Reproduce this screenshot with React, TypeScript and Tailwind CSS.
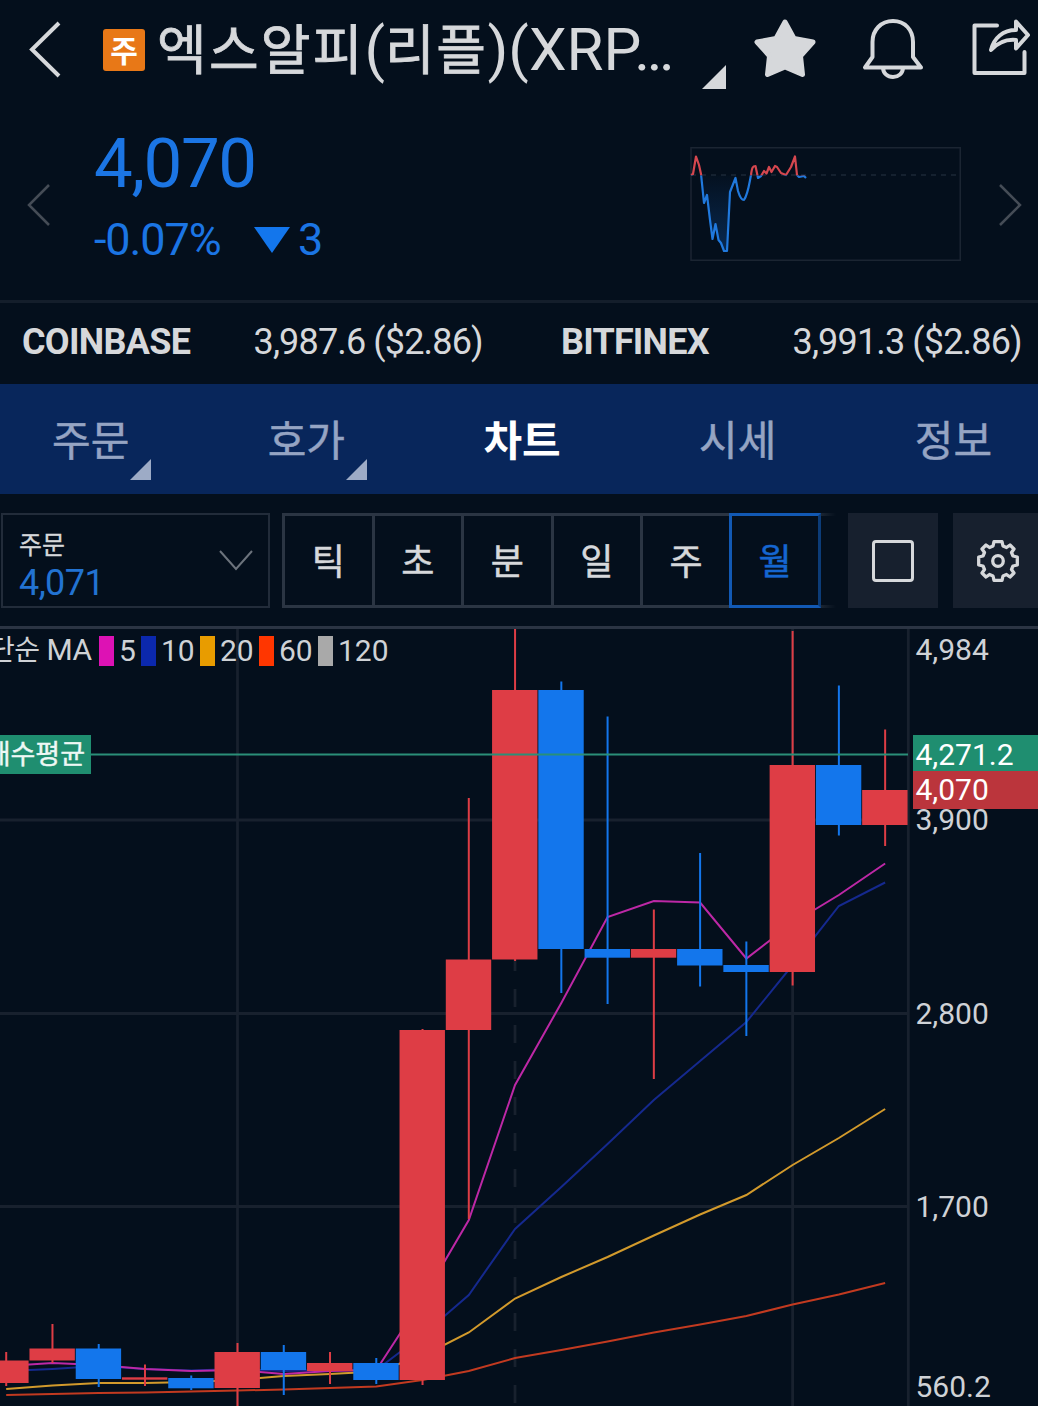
import { clsx } from "clsx";

type Candle = {
  up: boolean;
  top: number;
  bottom: number;
  high: number;
  low: number;
};

const CHART_WIDTH = 910;
const CHART_HEIGHT = 777;
const STEP = 46.26;
const FIRST_X = 6.2;

const candles: Candle[] = [
  { up: true, top: 731.5, bottom: 754, high: 723, low: 757 },
  { up: true, top: 719.5, bottom: 731.5, high: 695, low: 734 },
  { up: false, top: 719.5, bottom: 750, high: 715, low: 758 },
  { up: true, top: 748.3, bottom: 750.7, high: 735.5, low: 757 },
  { up: false, top: 749, bottom: 759.3, high: 746.5, low: 761 },
  { up: true, top: 723, bottom: 759, high: 714, low: 777 },
  { up: false, top: 723, bottom: 741, high: 716, low: 766 },
  { up: true, top: 734, bottom: 742, high: 723, low: 755 },
  { up: false, top: 734, bottom: 751, high: 729, low: 755 },
  { up: true, top: 401, bottom: 751, high: 400, low: 756 },
  { up: true, top: 330.5, bottom: 401, high: 169, low: 590 },
  { up: true, top: 61, bottom: 330.5, high: 0, low: 332 },
  { up: false, top: 61, bottom: 320, high: 52.5, low: 364 },
  { up: false, top: 320, bottom: 328.7, high: 87.5, low: 375 },
  { up: true, top: 320, bottom: 328.7, high: 280.5, low: 450 },
  { up: false, top: 320, bottom: 336.5, high: 224, low: 357.5 },
  { up: false, top: 336, bottom: 343, high: 312.5, low: 407 },
  { up: true, top: 136, bottom: 343, high: 2, low: 356.5 },
  { up: false, top: 136, bottom: 196, high: 56.5, low: 206.5 },
  { up: true, top: 161, bottom: 196, high: 100.5, low: 217 },
];

const averages = [
  {
    period: 60,
    stroke: "#c23a20",
    ys: [766, 765, 764, 763.5, 762.5, 761.5, 760.5, 759, 757.5, 751, 742, 729, 721, 712.5, 703.5, 695.5, 687, 675.5, 665.5, 654],
  },
  {
    period: 20,
    stroke: "#d29a2c",
    ys: [760, 756.5, 754, 754, 753, 751, 747, 745, 742.5, 727, 703.5, 669.5, 648, 628, 606.5, 585.5, 566, 536, 509, 480],
  },
  {
    period: 10,
    stroke: "#15298e",
    ys: [742, 740, 737, 740, 741.5, 740, 742, 741, 741, 706, 666, 600, 558, 515, 471, 432, 393, 336, 277, 253.5],
  },
  {
    period: 5,
    stroke: "#bd28a6",
    ys: [737, 734, 736, 740, 742, 741, 745, 742, 741, 670, 591, 456, 374, 288, 272, 273.5, 329.5, 294, 266, 234.5],
  },
];

const legend = [
  { label: "5", swatch: "bg-[#dd12b4]", box: "w-[42px]" },
  { label: "10", swatch: "bg-[#0b28ad]", box: "w-[59px]" },
  { label: "20", swatch: "bg-[#e89c00]", box: "w-[59px]" },
  { label: "60", swatch: "bg-[#ff3600]", box: "w-[59px]" },
  { label: "120", swatch: "bg-[#a9a9a9]", box: "w-[80px]" },
];

const tabs = [
  { label: "주문", menu: true },
  { label: "호가", menu: true },
  { label: "차트", active: true },
  { label: "시세" },
  { label: "정보" },
];

const intervals = ["틱", "초", "분", "일", "주"];

const candleX = (i: number) => FIRST_X + i * STEP;

const Corner = ({ className }: { className: string }) => (
  <svg className={className} viewBox="0 0 10 10" fill="currentColor">
    <path d="M10 0V10H0Z" />
  </svg>
);

const Header = () => (
  <header className="flex h-[112px] items-start text-[#d6d8db]">
    <svg className="mt-[20px] ml-[28px] h-[60px] w-[36px]" viewBox="0 0 36 60" fill="none" stroke="currentColor" strokeWidth="4">
      <path d="M31 3L4 29.5L31 56" />
    </svg>
    <div className="mt-[29px] ml-[39px] flex h-[42px] w-[42px] items-center justify-center rounded-[3px] bg-[#e87817] text-[30px] leading-none font-bold text-white">
      <span className="mt-[3px]">주</span>
    </div>
    <h1 className="mt-[10px] ml-[12px] w-[545px] text-[60px] leading-[80px] font-normal whitespace-nowrap">
      <span className="text-[54px] tracking-[2.200px] [-webkit-text-stroke:0.8px]">엑스알피</span>(
      <span className="text-[54px] tracking-[1.500px] [-webkit-text-stroke:0.8px]">리플</span>)(XRP
      <span className="-ml-[7px] tracking-[-3.500px]">...</span>
    </h1>
    <Corner className="mt-[65px] h-[24px] w-[24px]" />
    <svg className="mt-[17px] ml-[27px] h-[62px] w-[64px]" viewBox="0 0 64 62" fill="currentColor" stroke="currentColor" strokeWidth="5" strokeLinejoin="round">
      <path d="M32 5L41 21.5L60 25L47.5 39L49.5 57.5L32 50L14.500 57.500L16.500 39L4 25L23 21.500Z" />
    </svg>
    <svg className="mt-[17px] ml-[44px] h-[64px] w-[64px]" viewBox="0 0 64 64" fill="none" stroke="currentColor" strokeWidth="4" strokeLinejoin="round">
      <path d="M32 4C20 4 11.500 13 11.500 25V40L4 50.500H60L52 40V25C52 13 44 4 32 4Z" />
      <path d="M22 51C22.500 56.500 26.500 60 32 60S41.500 56.500 42 51" />
    </svg>
    <svg className="mt-[17px] ml-[46px] h-[62px] w-[60px]" viewBox="0 0 60 62" fill="none" stroke="currentColor" strokeWidth="4" strokeLinejoin="round" strokeLinecap="round">
      <path d="M26 8.500H3.500V56H53.500V35" />
      <path d="M45 4.500L57 18L45 31.500V23C35 22 27 25.500 20 33C23 21 32 13 45 13Z" />
    </svg>
  </header>
);

const Sparkline = () => (
  <svg className="mt-[35px] h-[114px] w-[271px]" viewBox="0 0 271 114" fill="none">
    <defs>
      <linearGradient id="dip" x1="0" y1="0" x2="0" y2="1">
        <stop offset="0" stopColor="#1376ec" stopOpacity="0.02" />
        <stop offset="1" stopColor="#1376ec" stopOpacity="0.25" />
      </linearGradient>
      <clipPath id="above">
        <rect width="271" height="28.500" />
      </clipPath>
      <clipPath id="below">
        <rect y="28.500" width="271" height="86" />
      </clipPath>
    </defs>
    <rect x="1" y="0.750" width="269.250" height="112.500" stroke="#1b2532" strokeWidth="1.500" />
    <path d="M1 28H266" stroke="#1b2936" strokeWidth="1.300" strokeDasharray="5 5" />
    <path d="M11 28.500L14 56L17 48L22 92L25 77L28 93L34 104H37L40 45L45 31V28.500Z" fill="url(#dip)" />
    {[
      { clip: "url(#above)", stroke: "#d5474f" },
      { clip: "url(#below)", stroke: "#2079dd" },
    ].map(({ clip, stroke }) => (
      <path
        key={clip}
        clipPath={clip}
        stroke={stroke}
        strokeWidth="2.200"
        strokeLinejoin="round"
        d="M1 28L3 27L6 9.500L9 18L11 27L14 56L17 48L20 73L22.500 92L25.500 77L28.500 93L31 96L34 104H37L40 45L45.500 31L48 44C49.500 49 51 53 54 53C58 47 59 38 61 28C62 20 63 19 65.500 19L68 31L71 29L74 24L76.500 26.500L79 20L81.500 25L85 19L87 20L91 26L96 28L101 20L105 9.500L107 28L109 30L114 29L116 31"
      />
    ))}
  </svg>
);

const Price = () => (
  <section className="flex h-[188px] items-start">
    <svg className="mt-[70px] ml-[26px] h-[46px] w-[24px]" viewBox="0 0 24 46" fill="none" stroke="#454c56" strokeWidth="2.500">
      <path d="M23 3L3 23L23 43" />
    </svg>
    <div className="ml-[44px] w-[596px] text-[#1b75e4]">
      <div className="mt-[12px] text-[69px] leading-[80px] tracking-[-1.400px]">4,070</div>
      <div className="mt-[14px] flex items-center text-[45px] leading-[44px]">
        <span className="w-[160px] tracking-[-1.100px]">-0.07%</span>
        <svg className="h-[26px] w-[36px]" viewBox="0 0 36 26" fill="#1376ec">
          <path d="M0 0H36L18 26Z" />
        </svg>
        <span className="ml-[8px]">3</span>
      </div>
    </div>
    <Sparkline />
    <svg className="mt-[70px] ml-[38px] h-[46px] w-[24px]" viewBox="0 0 24 46" fill="none" stroke="#454c56" strokeWidth="2.500">
      <path d="M1 3L21 23L1 43" />
    </svg>
  </section>
);

const Exchanges = () => (
  <section className="flex h-[84px] border-t-[3px] border-[#141e2b] pl-[22px] text-[36px] leading-[78px] whitespace-nowrap text-[#d6d8db]">
    <span className="w-[231.500px] shrink-0 font-bold tracking-[-0.700px]">COINBASE</span>
    <span className="w-[307.500px] shrink-0 tracking-[-0.850px]">3,987.6 ($2.86)</span>
    <span className="w-[231.500px] shrink-0 font-bold tracking-[-0.800px]">BITFINEX</span>
    <span className="tracking-[-0.850px]">3,991.3 ($2.86)</span>
  </section>
);

const Tabs = () => (
  <nav className="flex h-[110px] overflow-hidden bg-[#08265b] text-[42px]">
    {tabs.map((tab) => (
      <div
        key={tab.label}
        className={clsx(
          "relative w-[215.700px] shrink-0 pl-[52px] leading-[115px]",
          tab.active ? "font-bold text-white" : "text-[#95a4c3] [-webkit-text-stroke:0.5px]"
        )}
      >
        {tab.label}
        {tab.menu && <Corner className="absolute top-[75px] left-[130px] h-[21px] w-[21px] text-[#9dabc6]" />}
      </div>
    ))}
  </nav>
);

const Toolbar = () => (
  <section className="flex h-[132px] items-start overflow-hidden pt-[19px] text-[#d6d8db]">
    <div className="ml-[1px] flex h-[95px] w-[269px] shrink-0 justify-between border-[2.500px] border-[#222c3a] pr-[14px] pl-[16px]">
      <div className="pt-[15px]">
        <div className="text-[25px] leading-[32px] [-webkit-text-stroke:0.3px]">주문</div>
        <div className="text-[36px] leading-[42px] tracking-[-0.600px] text-[#2273d2]">4,071</div>
      </div>
      <svg className="mt-[34px] h-[24px] w-[36px]" viewBox="0 0 36 24" fill="none" stroke="#6c737c" strokeWidth="2">
        <path d="M2 2L18 20L34 2" />
      </svg>
    </div>
    <div className="ml-[12px] flex h-[95px] shrink-0 border-y-[3px] border-l-[3px] border-[#2b3543] text-[36px] leading-[95px] [-webkit-text-stroke:0.5px]">
      {intervals.map((name, i) => (
        <div key={name} className={clsx("text-center", i < 4 ? "w-[89.500px] border-r-[3px] border-[#2b3543]" : "w-[86px]")}>
          {name}
        </div>
      ))}
    </div>
    <div className="h-[95px] w-[92px] shrink-0 border-[3px] border-[#1259b4] border-r-[#0c3c78] text-center text-[36px] leading-[95px] text-[#1566d0] [-webkit-text-stroke:0.5px]">
      월
    </div>
    <div className="flex h-[95px] w-[15px] shrink-0 flex-col justify-between">
      <div className="h-[3px] bg-linear-to-r from-[#1b2532] to-transparent" />
      <div className="h-[3px] bg-linear-to-r from-[#1b2532] to-transparent" />
    </div>
    <div className="ml-[12px] flex h-[95px] w-[90px] shrink-0 items-center justify-center bg-[#17202e]">
      <div className="h-[42px] w-[42px] rounded-[4px] border-[3.500px] border-[#d6d8db]" />
    </div>
    <div className="ml-[15px] flex h-[95px] w-[90px] shrink-0 items-center justify-center bg-[#17202e]">
      <svg className="h-[42px] w-[42px]" viewBox="-21 -21 42 42" fill="none" stroke="#d6d8db" strokeWidth="3.300" strokeLinejoin="round">
        <path d="M-4 -19.300H4L5 -15L8.500 -13.500L12 -16L16 -12L13.500 -8.500L15 -5L19.300 -4V4L15 5L13.500 8.500L16 12L12 16L8.500 13.500L5 15L4 19.300H-4L-5 15L-8.500 13.500L-12 16L-16 12L-13.500 8.500L-15 5L-19.300 4V-4L-15 -5L-13.500 -8.500L-16 -12L-12 -16L-8.500 -13.500L-5 -15Z" />
        <circle r="5.300" />
      </svg>
    </div>
  </section>
);

const CandleChart = () => (
  <svg className="h-[777px] w-[910px] shrink-0" viewBox={`0 0 ${CHART_WIDTH} ${CHART_HEIGHT}`} fill="none">
    <g stroke="#18212e" strokeWidth="2.800">
      <path d="M237.500 0V777M792.600 0V777M908.300 0V777" />
      <path d="M0 191H908M0 384.500H908M0 577.500H908" />
      <path d="M515 324V777" strokeDasharray="18 18" />
    </g>
    {averages.map(({ period, stroke, ys }) => (
      <polyline key={period} stroke={stroke} strokeWidth="2" points={ys.map((y, i) => `${candleX(i)},${y}`).join(" ")} />
    ))}
    {candles.map((c, i) => (
      <g key={i} fill={c.up ? "#de3d45" : "#1376ec"}>
        <rect x={candleX(i) - 1} y={c.high} width="2" height={c.low - c.high} />
        <rect x={candleX(i) - 23} y={c.top} width="45.400" height={c.bottom - c.top} />
      </g>
    ))}
    <path d="M90 125.500H908" stroke="#2a8f78" strokeWidth="2" />
  </svg>
);

const Chart = () => (
  <section className="relative flex h-[780px] overflow-hidden border-t-[3px] border-[#2b3443] text-[30px] leading-[36px] text-[#cfd2d6]">
    <CandleChart />
    <div className="absolute top-[3px] left-[-11px] flex items-center whitespace-nowrap">
      <span className="w-[109.500px] tracking-[-0.500px]">
        <span className="text-[28px]">단순</span> MA
      </span>
      {legend.map((item) => (
        <span key={item.label} className={clsx("flex shrink-0 items-center", item.box)}>
          <span className={clsx("mr-[5px] h-[30px] w-[15.500px] shrink-0", item.swatch)} />
          {item.label}
        </span>
      ))}
    </div>
    <div className="absolute top-[106px] left-0 flex h-[39px] w-[91px] justify-end overflow-hidden bg-[#1f8e70] pr-[6px] text-[27px] leading-[41px] whitespace-nowrap text-[#eef8f5] [-webkit-text-stroke:0.4px]">
      매수평균
    </div>
    <div className="relative flex-1">
      <div className="absolute top-[106px] left-[3px] h-[36px] w-[125px] bg-[#1f8e70] pl-[2.500px] leading-[39px] text-white">4,271.2</div>
      <div className="absolute top-[142px] left-[3px] h-[38px] w-[125px] bg-[#bb353c] pl-[2.500px] leading-[37px] text-white">4,070</div>
      <span className="absolute top-[3px] left-[5.500px]">4,984</span>
      <span className="absolute top-[173px] left-[5.500px]">3,900</span>
      <span className="absolute top-[367px] left-[5.500px]">2,800</span>
      <span className="absolute top-[560px] left-[5.500px]">1,700</span>
      <span className="absolute top-[740px] left-[5.500px]">560.2</span>
    </div>
  </section>
);

export default function App() {
  return (
    <main className="h-[1406px] w-[1038px] overflow-hidden bg-[#040f1c] font-[Roboto,'Noto_Sans_CJK_KR',sans-serif]">
      <Header />
      <Price />
      <Exchanges />
      <Tabs />
      <Toolbar />
      <Chart />
    </main>
  );
}
